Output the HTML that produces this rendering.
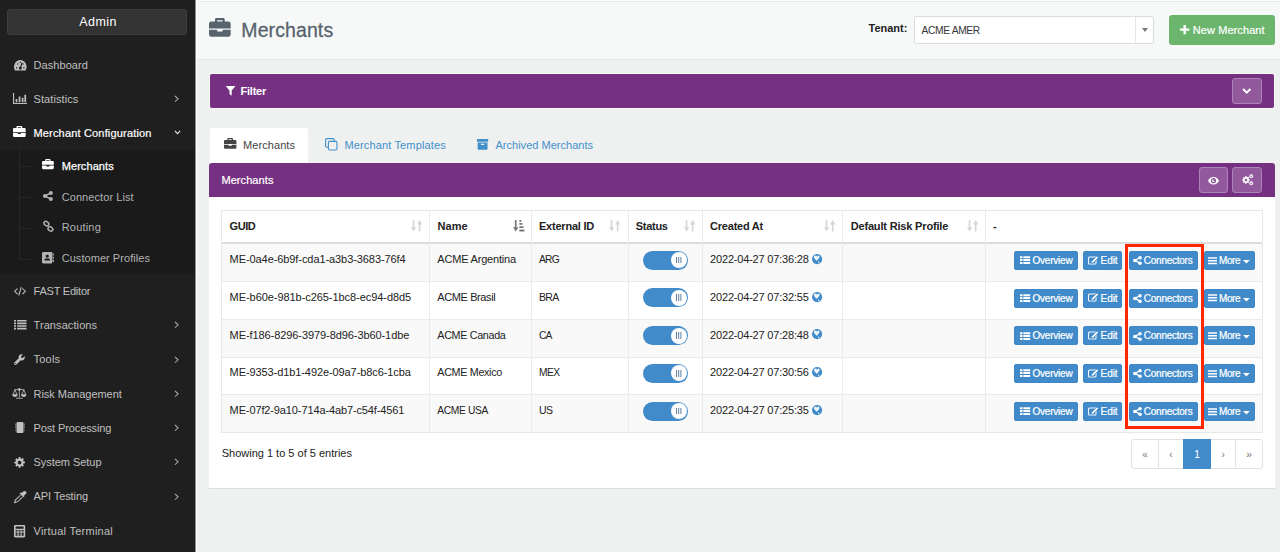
<!DOCTYPE html>
<html lang="en">
<head>
<meta charset="utf-8">
<title>Merchants</title>
<style>
*{box-sizing:border-box;margin:0;padding:0}
html,body{width:1280px;height:552px;overflow:hidden}
body{font-family:"Liberation Sans",sans-serif;font-size:11px;color:#333;background:#eff1f1;position:relative}
svg{display:block;overflow:visible}
.ic{position:absolute}
.t{position:absolute;line-height:16px;white-space:nowrap;color:#222}
#side{position:absolute;left:0;top:0;width:196px;height:552px;background:#1f1f1f}
#admin{position:absolute;left:7px;top:9px;width:180px;height:26px;background:#333;border:1px solid #3d3d3d;border-radius:3px}
#sub{position:absolute;left:0;top:150px;width:196px;height:124px;background:#1a1a1a}
.tr{position:absolute;background:#272727}
#hdr{position:absolute;left:197px;top:0;width:1083px;height:60px;background:#f7f9f9;border-bottom:1px solid #e4eaec;border-top:1px solid #fbfcfc;box-shadow:inset 0 1px 0 #e9ebeb}
#edge{position:absolute;left:195px;top:0;width:2px;height:552px;background:#fff;border-left:1px solid #8c8c8c}
#sel{position:absolute;left:914px;top:16px;width:240px;height:28px;background:#fff;border:1px solid #d9dddf;border-radius:2px}
#sel i{position:absolute;left:220px;top:0;width:1px;height:26px;background:#e4e6e8}
#sel b{position:absolute;left:226.5px;top:11px;border:3.2px solid transparent;border-top:4.2px solid #777;border-bottom:0}
#newm{position:absolute;left:1169px;top:15px;width:106px;height:30px;background:#6bb56d;border-radius:3px}
.pbar{position:absolute;background:#763081}
.pbtn{position:absolute;height:26px;background:#925a9d;border:1px solid #ad82b6;border-radius:3px}
#tabA{position:absolute;left:210px;top:128px;width:98px;height:36px;background:#fff;border-radius:3px 3px 0 0}
#card{position:absolute;left:209px;top:197px;width:1066px;height:292px;background:#fff;border-bottom:1px solid #dcdfdf}
#tbl{position:absolute;left:221px;top:210px;width:1042px;height:223px;border:1px solid #e8e8e8}
.row{position:absolute;left:222px;width:1040px}
.vl{position:absolute;top:211px;width:1px;height:221px;background:#ebebeb}
.btn{position:absolute;height:19px;background:#428bca;border:1px solid #3d86c8;border-radius:2px}
.sw{position:absolute;width:45px;height:19px;border-radius:9.5px;background:#428bca}
.sw i{position:absolute;left:27.6px;top:1.5px;width:16px;height:16px;border-radius:8px;background:#fff}
.sw i:before{content:"";position:absolute;left:5.2px;top:4.5px;width:1px;height:6.6px;background:#5f7fa0;box-shadow:2.2px 0 0 #5f7fa0,4.4px 0 0 #5f7fa0}
.pg{position:absolute;top:439px;height:30px;border:1px solid #e2e2e2;background:#fff}
#hl{position:absolute;left:1125px;top:244px;width:79px;height:185px;border:3px solid #ff2600}
</style>
</head>
<body>

<div id="side">
<div id="admin"></div>
<div class="t" style="left:79.3px;top:14px;font-size:12.5px;color:#fff;letter-spacing:0.41px">Admin</div>
<div id="sub"></div>
<div class="tr" style="left:19px;top:150px;width:1px;height:110px"></div>
<div class="tr" style="left:19px;top:166px;width:12px;height:1px"></div>
<div class="tr" style="left:19px;top:197px;width:12px;height:1px"></div>
<div class="tr" style="left:19px;top:228px;width:12px;height:1px"></div>
<div class="tr" style="left:19px;top:259px;width:12px;height:1px"></div>
<svg class="ic" style="left:13.5px;top:59.6px;color:#c0c0c0;" width="12.6" height="10.6" viewBox="0 1.5 16 12.5" preserveAspectRatio="none" fill="currentColor"><path fill-rule="evenodd" d="M8 1.5a8 8 0 0 0-6.9 12 .9.9 0 0 0 .8.5h12.2a.9.9 0 0 0 .8-.5A8 8 0 0 0 8 1.5zM8 3.2a.9.9 0 1 1 0 1.8.9.9 0 0 1 0-1.8zM3.4 11.6a.9.9 0 1 1 0-1.8.9.9 0 0 1 0 1.8zm1.3-4.4a.9.9 0 1 1 0-1.8.9.9 0 0 1 0 1.8zm6-1.9L9.3 9.7a1.8 1.8 0 1 1-1.3-.4l1.4-4.4a.67.67 0 0 1 1.3.4zm.7 1.9a.9.9 0 1 1 0-1.8.9.9 0 0 1 0 1.8zm1.2 4.4a.9.9 0 1 1 0-1.8.9.9 0 0 1 0 1.8z"/></svg>
<div class="t" style="left:33.5px;top:57px;font-size:11px;color:#c0c0c0;letter-spacing:0.07px">Dashboard</div>
<svg class="ic" style="left:13px;top:93px;color:#c0c0c0;" width="14" height="11" viewBox="0 1 16 13" preserveAspectRatio="none" fill="currentColor"><path d="M0 1h1.3v11.7H16V14H0zM3 8h2v4H3zM6.5 5h2v7h-2zM10 6.5h2V12h-2zM13 3h2v9h-2z"/></svg>
<div class="t" style="left:33.5px;top:91px;font-size:11px;color:#c0c0c0;letter-spacing:0.09px">Statistics</div>
<svg class="ic" style="left:174.3px;top:95.4px;color:#aaa" width="5" height="7.6" viewBox="0 0 5.5 9" preserveAspectRatio="none"><path d="M1 1l3.5 3.5L1 8" fill="none" stroke="currentColor" stroke-width="1.2"/></svg>
<svg class="ic" style="left:13.4px;top:126.4px;color:#fff;" width="12.7" height="11" viewBox="0 0.4 16 13.6" preserveAspectRatio="none" fill="currentColor"><path d="M4.4 3V1.6C4.4.9 5 .4 5.6.4h4.8c.7 0 1.2.5 1.2 1.2V3h2.8c.9 0 1.6.7 1.6 1.6V8H0V4.6C0 3.7.7 3 1.6 3zM6 3h4V2H6zM0 9h6v.8c0 .3.2.5.5.5h3c.3 0 .5-.2.5-.5V9h6v3.4c0 .9-.7 1.6-1.6 1.6H1.6C.7 14 0 13.3 0 12.4z" fill-rule="evenodd"/></svg>
<div class="t" style="left:33.5px;top:125px;font-size:11px;color:#fff;-webkit-text-stroke:0.2px #fff;letter-spacing:0.17px">Merchant Configuration</div>
<svg class="ic" style="left:173.6px;top:130.2px;color:#e8e8e8" width="7" height="4.6" viewBox="0 0 8 5" preserveAspectRatio="none"><path d="M1 1l3 3 3-3" fill="none" stroke="currentColor" stroke-width="1.2"/></svg>
<svg class="ic" style="left:13.9px;top:287px;color:#c0c0c0;" width="12" height="8.6" viewBox="0.2 0.7 15.6 13.6" preserveAspectRatio="none" fill="currentColor"><g fill="none" stroke="currentColor" stroke-width="1.5" stroke-linecap="round" stroke-linejoin="round"><path d="M4.5 3.5L1 7.5l3.5 4M11.5 3.5L15 7.5l-3.5 4M9.5 1.5L6.5 13.5"/></g></svg>
<div class="t" style="left:33.5px;top:283px;font-size:11px;color:#c0c0c0;letter-spacing:-0.21px">FAST Editor</div>
<svg class="ic" style="left:13.5px;top:319.8px;color:#c0c0c0;" width="12.5" height="9.4" viewBox="0 1.5 16 12.2" preserveAspectRatio="none" fill="currentColor"><path d="M0 1.5h2.6v2H0zM4 1.5h12v2H4zM0 4.9h2.6v2H0zM4 4.9h12v2H4zM0 8.3h2.6v2H0zM4 8.3h12v2H4zM0 11.7h2.6v2H0zM4 11.7h12v2H4z"/></svg>
<div class="t" style="left:33.5px;top:317px;font-size:11px;color:#c0c0c0;letter-spacing:0.09px">Transactions</div>
<svg class="ic" style="left:174.3px;top:321.2px;color:#aaa" width="5" height="7.6" viewBox="0 0 5.5 9" preserveAspectRatio="none"><path d="M1 1l3.5 3.5L1 8" fill="none" stroke="currentColor" stroke-width="1.2"/></svg>
<svg class="ic" style="left:14.3px;top:354px;color:#c0c0c0;" width="11" height="11" viewBox="0 0 16 16" preserveAspectRatio="none" fill="currentColor"><path d="M15.6 3.6a.38.38 0 0 0-.6-.2L12.7 5.7l-2.1-.3-.3-2.1L12.6 1a.38.38 0 0 0-.2-.6 4.5 4.5 0 0 0-5.5 5.8L.6 12.5a2 2 0 0 0 2.9 2.9L9.8 9.1a4.5 4.5 0 0 0 5.8-5.5zM2 14.7a.75.75 0 1 1 0-1.5.75.75 0 0 1 0 1.5z"/></svg>
<div class="t" style="left:33.5px;top:351px;font-size:11px;color:#c0c0c0;letter-spacing:0.22px">Tools</div>
<svg class="ic" style="left:174.3px;top:355.6px;color:#aaa" width="5" height="7.6" viewBox="0 0 5.5 9" preserveAspectRatio="none"><path d="M1 1l3.5 3.5L1 8" fill="none" stroke="currentColor" stroke-width="1.2"/></svg>
<svg class="ic" style="left:12.2px;top:387.4px;color:#c0c0c0;" width="14.7" height="12" viewBox="0 0 20 16" preserveAspectRatio="none" fill="currentColor"><g fill="none" stroke="currentColor" stroke-width="1.1" stroke-linejoin="round"><path d="M10 1.5V14M3 3.5h14M5.5 15h9M4 4L1 10.5h6zM16 4l-3 6.5h6z"/><path d="M1 10.5a3 2.2 0 0 0 6 0zM13 10.5a3 2.2 0 0 0 6 0z" fill="currentColor"/></g><circle cx="10" cy="3.2" r="1.6"/></svg>
<div class="t" style="left:33.5px;top:386px;font-size:11px;color:#c0c0c0;letter-spacing:-0.02px">Risk Management</div>
<svg class="ic" style="left:174.3px;top:389.9px;color:#aaa" width="5" height="7.6" viewBox="0 0 5.5 9" preserveAspectRatio="none"><path d="M1 1l3.5 3.5L1 8" fill="none" stroke="currentColor" stroke-width="1.2"/></svg>
<svg class="ic" style="left:14.8px;top:422px;color:#c0c0c0;" width="10" height="11" viewBox="0.8 0 14.4 16" preserveAspectRatio="none" fill="currentColor"><rect x="3" y="0" width="10" height="16" rx="1.5"/><path d="M0.8 2.5h2v1h-2zM0.8 5.5h2v1h-2zM0.8 8.5h2v1h-2zM0.8 11.5h2v1h-2zM13.2 2.5h2v1h-2zM13.2 5.5h2v1h-2zM13.2 8.5h2v1h-2zM13.2 11.5h2v1h-2z"/></svg>
<div class="t" style="left:33.5px;top:420px;font-size:11px;color:#c0c0c0;letter-spacing:-0.11px">Post Processing</div>
<svg class="ic" style="left:174.3px;top:424.2px;color:#aaa" width="5" height="7.6" viewBox="0 0 5.5 9" preserveAspectRatio="none"><path d="M1 1l3.5 3.5L1 8" fill="none" stroke="currentColor" stroke-width="1.2"/></svg>
<svg class="ic" style="left:14.1px;top:456.6px;color:#c0c0c0;" width="11.2" height="11.2" viewBox="0 0 16 16" preserveAspectRatio="none" fill="currentColor"><path fill-rule="evenodd" d="M6.8 0h2.4l.4 2.1 1.1.5 1.8-1.2 1.7 1.7-1.2 1.8.5 1.1 2.1.4v2.4l-2.1.4-.5 1.1 1.2 1.8-1.7 1.7-1.8-1.2-1.1.5-.4 2.1H6.8l-.4-2.1-1.1-.5-1.8 1.2-1.7-1.7 1.2-1.8-.5-1.1L.4 9.2V6.8l2.1-.4.5-1.1L1.8 3.5l1.7-1.7 1.8 1.2 1.1-.5zM8 5.3a2.7 2.7 0 1 0 0 5.4 2.7 2.7 0 0 0 0-5.4z"/></svg>
<div class="t" style="left:33.5px;top:454px;font-size:11px;color:#c0c0c0;letter-spacing:-0.04px">System Setup</div>
<svg class="ic" style="left:174.3px;top:458.4px;color:#aaa" width="5" height="7.6" viewBox="0 0 5.5 9" preserveAspectRatio="none"><path d="M1 1l3.5 3.5L1 8" fill="none" stroke="currentColor" stroke-width="1.2"/></svg>
<svg class="ic" style="left:13.6px;top:490.7px;color:#c0c0c0;" width="12.4" height="11.8" viewBox="0.5 0 15.8 16" preserveAspectRatio="none" fill="currentColor"><path d="M12.3.7a2.4 2.4 0 0 1 3.4 3.4l-2.4 2.4.6.6-1.4 1.4-5-5 1.4-1.4.6.6z"/><path d="M8.6 5.8L2.4 12a1.5 1.5 0 0 0-.4 1l-.1 1-.9 1.3.7.7 1.3-.9 1-.1a1.5 1.5 0 0 0 1-.4l6.2-6.2" fill="none" stroke="currentColor" stroke-width="1.3"/></svg>
<div class="t" style="left:33.5px;top:488px;font-size:11px;color:#c0c0c0;letter-spacing:-0.09px">API Testing</div>
<svg class="ic" style="left:174.3px;top:492.8px;color:#aaa" width="5" height="7.6" viewBox="0 0 5.5 9" preserveAspectRatio="none"><path d="M1 1l3.5 3.5L1 8" fill="none" stroke="currentColor" stroke-width="1.2"/></svg>
<svg class="ic" style="left:13.6px;top:524.7px;color:#c0c0c0;" width="11.2" height="12.4" viewBox="1 0 14 16" preserveAspectRatio="none" fill="currentColor"><path fill-rule="evenodd" d="M2.5 0h11c.8 0 1.5.7 1.5 1.5v13c0 .8-.7 1.5-1.5 1.5h-11C1.7 16 1 15.3 1 14.5v-13C1 .7 1.7 0 2.5 0zM3 2v3h10V2zM3 6.5v2h2.4v-2zm3.8 0v2h2.4v-2zm3.8 0v2H13v-2zM3 9.7v2h2.4v-2zm3.8 0v2h2.4v-2zm3.8 0V14H13V9.7zM3 12v2h2.4v-2zm3.8 0v2h2.4v-2z"/></svg>
<div class="t" style="left:33.5px;top:523px;font-size:11px;color:#c0c0c0;letter-spacing:0.26px">Virtual Terminal</div>
<svg class="ic" style="left:42px;top:159.3px;color:#fff;" width="11.8" height="10.3" viewBox="0 0.4 16 13.6" preserveAspectRatio="none" fill="currentColor"><path d="M4.4 3V1.6C4.4.9 5 .4 5.6.4h4.8c.7 0 1.2.5 1.2 1.2V3h2.8c.9 0 1.6.7 1.6 1.6V8H0V4.6C0 3.7.7 3 1.6 3zM6 3h4V2H6zM0 9h6v.8c0 .3.2.5.5.5h3c.3 0 .5-.2.5-.5V9h6v3.4c0 .9-.7 1.6-1.6 1.6H1.6C.7 14 0 13.3 0 12.4z" fill-rule="evenodd"/></svg>
<div class="t" style="left:61.7px;top:158px;font-size:11px;color:#fff;-webkit-text-stroke:0.25px #fff;letter-spacing:0.08px">Merchants</div>
<svg class="ic" style="left:43.2px;top:191px;color:#b2b2b2;" width="9.8" height="10" viewBox="0.4 0.2 15 15.6" preserveAspectRatio="none" fill="currentColor"><circle cx="12.4" cy="3.2" r="3.1"/><circle cx="3.4" cy="8" r="3.1"/><circle cx="12.4" cy="12.8" r="3.1"/><path d="M3.4 8l9-4.8M3.4 8l9 4.8" stroke="currentColor" stroke-width="2.3" fill="none"/></svg>
<div class="t" style="left:61.7px;top:189px;font-size:11px;color:#b2b2b2;letter-spacing:0.08px">Connector List</div>
<svg class="ic" style="left:42.7px;top:221.3px;color:#b2b2b2;" width="10.8" height="10.6" viewBox="0 0 16 16" preserveAspectRatio="none" fill="currentColor"><g fill="none" stroke="currentColor" stroke-width="2.1"><rect x="1.2" y="1.2" width="7.6" height="5.6" rx="2.8" transform="rotate(40 5 4)"/><rect x="7.2" y="9.2" width="7.6" height="5.6" rx="2.8" transform="rotate(40 11 12)"/></g></svg>
<div class="t" style="left:61.7px;top:219px;font-size:11px;color:#b2b2b2;letter-spacing:0.2px">Routing</div>
<svg class="ic" style="left:42.4px;top:252.3px;color:#b2b2b2;" width="11.9" height="11.4" viewBox="1 0 14.8 16" preserveAspectRatio="none" fill="currentColor"><path fill-rule="evenodd" d="M2.6 0h9.8c.9 0 1.6.7 1.6 1.6v12.8c0 .9-.7 1.6-1.6 1.6H2.6C1.7 16 1 15.3 1 14.4V1.6C1 .7 1.7 0 2.6 0zM7.5 4a2 2 0 1 0 0 4 2 2 0 0 0 0-4zM4 11.4c0 .4.3.6.7.6h5.6c.4 0 .7-.2.7-.6v-.5C11 9.8 10 9 8.9 9h-.2a2.9 2.9 0 0 1-2.4 0h-.2C5 9 4 9.8 4 10.9z"/><path d="M14.5 2h.9c.2 0 .4.2.4.4v2.2c0 .2-.2.4-.4.4h-.9zM14.5 6.5h.9c.2 0 .4.2.4.4v2.2c0 .2-.2.4-.4.4h-.9zM14.5 11h.9c.2 0 .4.2.4.4v2.2c0 .2-.2.4-.4.4h-.9z"/></svg>
<div class="t" style="left:61.7px;top:250px;font-size:11px;color:#b2b2b2;letter-spacing:0.05px">Customer Profiles</div>
</div>
<div id="edge"></div>
<div id="hdr"></div>
<svg class="ic" style="left:208.6px;top:17.8px;color:#57646e;" width="21.7" height="18.7" viewBox="0 0.4 16 13.6" preserveAspectRatio="none" fill="currentColor"><path d="M4.4 3V1.6C4.4.9 5 .4 5.6.4h4.8c.7 0 1.2.5 1.2 1.2V3h2.8c.9 0 1.6.7 1.6 1.6V8H0V4.6C0 3.7.7 3 1.6 3zM6 3h4V2H6zM0 9h6v.8c0 .3.2.5.5.5h3c.3 0 .5-.2.5-.5V9h6v3.4c0 .9-.7 1.6-1.6 1.6H1.6C.7 14 0 13.3 0 12.4z" fill-rule="evenodd"/></svg>
<div class="t" style="left:241.3px;top:18px;font-size:19.5px;line-height:24px;color:#57646e;-webkit-text-stroke:0.3px #57646e;letter-spacing:0.1px">Merchants</div>
<div class="t" style="left:868.5px;top:20px;font-size:11px;font-weight:bold;color:#222;letter-spacing:0.0px">Tenant:</div>
<div id="sel"><i></i><b></b></div>
<div class="t" style="left:921.5px;top:22px;font-size:11px;color:#333;"><span style="font-size:10.25px;letter-spacing:-0.35px">ACME AMER</span></div>
<div id="newm"></div>
<svg class="ic" style="left:1180px;top:24.9px" width="9.4" height="9.2" viewBox="0 0 10 10" preserveAspectRatio="none"><path d="M3.7 0h2.6v3.7H10v2.6H6.3V10H3.7V6.3H0V3.7h3.7z" fill="#fff"/></svg>
<div class="t" style="left:1192.8px;top:22px;font-size:11px;color:#fff;-webkit-text-stroke:0.2px #fff;letter-spacing:0.08px">New Merchant</div>
<div class="pbar" style="left:209px;top:73px;width:1066px;height:36px;border:1px solid #fbfafb;border-radius:3px"></div>
<svg class="ic" style="left:225.6px;top:86.1px;color:#fff;" width="9.2" height="9.6" viewBox="0 0 10 10" preserveAspectRatio="none" fill="currentColor"><path d="M.3 0h9.4c.3 0 .4.3.2.5L6.2 4.6v4.9c0 .3-.3.4-.5.3L4 8.6a.5.5 0 0 1-.2-.4V4.6L.1.5C-.1.3 0 0 .3 0z"/></svg>
<div class="t" style="left:240.6px;top:83px;font-size:11px;font-weight:bold;color:#fff;letter-spacing:-0.26px">Filter</div>
<div class="pbtn" style="left:1232px;top:78px;width:30px"></div>
<svg class="ic" style="left:1242.4px;top:88.3px" width="9.4" height="6.2" viewBox="0 0 9 6" preserveAspectRatio="none"><path d="M1 1l3.5 3.5L8 1" fill="none" stroke="#fff" stroke-width="1.9"/></svg>
<div id="tabA"></div>
<svg class="ic" style="left:223.8px;top:138.1px;color:#444;" width="12.4" height="10.8" viewBox="0 0.4 16 13.6" preserveAspectRatio="none" fill="currentColor"><path d="M4.4 3V1.6C4.4.9 5 .4 5.6.4h4.8c.7 0 1.2.5 1.2 1.2V3h2.8c.9 0 1.6.7 1.6 1.6V8H0V4.6C0 3.7.7 3 1.6 3zM6 3h4V2H6zM0 9h6v.8c0 .3.2.5.5.5h3c.3 0 .5-.2.5-.5V9h6v3.4c0 .9-.7 1.6-1.6 1.6H1.6C.7 14 0 13.3 0 12.4z" fill-rule="evenodd"/></svg>
<div class="t" style="left:243px;top:137px;font-size:11px;color:#444;letter-spacing:0.08px">Merchants</div>
<svg class="ic" style="left:325.4px;top:137.7px;color:#418fc9;" width="12.6" height="12.6" viewBox="0 0 12.6 12.6" preserveAspectRatio="none" fill="currentColor"><g fill="none" stroke="currentColor" stroke-width="1.1"><rect x=".6" y=".6" width="8.6" height="8.6" rx="1.4"/><rect x="3.4" y="3.4" width="8.6" height="8.6" rx="1.4" fill="#eff1f1"/></g></svg>
<div class="t" style="left:344.5px;top:137px;font-size:11px;color:#418fc9;letter-spacing:0.14px">Merchant Templates</div>
<svg class="ic" style="left:477px;top:138.8px;color:#418fc9;" width="11.2" height="10.7" viewBox="0 0 12 12" preserveAspectRatio="none" fill="currentColor"><path d="M0 0h12v3.2H0zM.7 4h10.6v7.2c0 .4-.3.8-.8.8h-9c-.5 0-.8-.4-.8-.8zM4.2 5.4v1.2h3.6V5.4z" fill-rule="evenodd"/></svg>
<div class="t" style="left:495.4px;top:137px;font-size:11px;color:#418fc9;letter-spacing:0.03px">Archived Merchants</div>
<div id="card"></div>
<div class="pbar" style="left:209px;top:163px;width:1066px;height:34px;border-radius:3px 3px 0 0"></div>
<div class="t" style="left:221.4px;top:172px;font-size:11px;color:#fff;-webkit-text-stroke:0.2px #fff;letter-spacing:0.08px">Merchants</div>
<div class="pbtn" style="left:1199px;top:167px;width:29px"></div>
<svg class="ic" style="left:1208px;top:176.7px;color:#fff;" width="11" height="7.4" viewBox="0 0 12 8" preserveAspectRatio="none" fill="currentColor"><path fill-rule="evenodd" d="M6 0C3.3 0 1 1.6 0 4c1 2.4 3.3 4 6 4s5-1.6 6-4C11 1.6 8.7 0 6 0zm0 1.2a2.8 2.8 0 1 1 0 5.6 2.8 2.8 0 0 1 0-5.6zM6 2.5A1.5 1.5 0 1 0 7.5 4 1 1 0 0 1 6 2.5z"/></svg>
<div class="pbtn" style="left:1232px;top:167px;width:30px"></div>
<svg class="ic" style="left:1241.6px;top:175.6px;color:#fff;" width="8" height="8.2" viewBox="0 0 16 16" preserveAspectRatio="none" fill="currentColor"><path fill-rule="evenodd" d="M6.8 0h2.4l.4 2.1 1.1.5 1.8-1.2 1.7 1.7-1.2 1.8.5 1.1 2.1.4v2.4l-2.1.4-.5 1.1 1.2 1.8-1.7 1.7-1.8-1.2-1.1.5-.4 2.1H6.8l-.4-2.1-1.1-.5-1.8 1.2-1.7-1.7 1.2-1.8-.5-1.1L.4 9.2V6.8l2.1-.4.5-1.1L1.8 3.5l1.7-1.7 1.8 1.2 1.1-.5zM8 5.3a2.7 2.7 0 1 0 0 5.4 2.7 2.7 0 0 0 0-5.4z"/></svg>
<svg class="ic" style="left:1249.2px;top:174.4px;color:#fff;" width="4.4" height="4.6" viewBox="0 0 16 16" preserveAspectRatio="none" fill="currentColor"><path fill-rule="evenodd" d="M6.8 0h2.4l.4 2.1 1.1.5 1.8-1.2 1.7 1.7-1.2 1.8.5 1.1 2.1.4v2.4l-2.1.4-.5 1.1 1.2 1.8-1.7 1.7-1.8-1.2-1.1.5-.4 2.1H6.8l-.4-2.1-1.1-.5-1.8 1.2-1.7-1.7 1.2-1.8-.5-1.1L.4 9.2V6.8l2.1-.4.5-1.1L1.8 3.5l1.7-1.7 1.8 1.2 1.1-.5zM8 5.3a2.7 2.7 0 1 0 0 5.4 2.7 2.7 0 0 0 0-5.4z"/></svg>
<svg class="ic" style="left:1249.2px;top:180.8px;color:#fff;" width="4.4" height="4.6" viewBox="0 0 16 16" preserveAspectRatio="none" fill="currentColor"><path fill-rule="evenodd" d="M6.8 0h2.4l.4 2.1 1.1.5 1.8-1.2 1.7 1.7-1.2 1.8.5 1.1 2.1.4v2.4l-2.1.4-.5 1.1 1.2 1.8-1.7 1.7-1.8-1.2-1.1.5-.4 2.1H6.8l-.4-2.1-1.1-.5-1.8 1.2-1.7-1.7 1.2-1.8-.5-1.1L.4 9.2V6.8l2.1-.4.5-1.1L1.8 3.5l1.7-1.7 1.8 1.2 1.1-.5zM8 5.3a2.7 2.7 0 1 0 0 5.4 2.7 2.7 0 0 0 0-5.4z"/></svg>
<div id="tbl"></div>
<div class="row" style="top:242px;height:2px;background:#dcdcdc"></div>
<div class="row" style="top:244px;height:37px;background:#f9f9f9;"></div>
<div class="row" style="top:281px;height:38px;background:#fff;border-top:1px solid #ebebeb;"></div>
<div class="row" style="top:319px;height:38px;background:#f9f9f9;border-top:1px solid #ebebeb;"></div>
<div class="row" style="top:357px;height:37px;background:#fff;border-top:1px solid #ebebeb;"></div>
<div class="row" style="top:394px;height:38px;background:#f9f9f9;border-top:1px solid #ebebeb;"></div>
<div class="vl" style="left:429px"></div>
<div class="vl" style="left:531px"></div>
<div class="vl" style="left:628px"></div>
<div class="vl" style="left:702px"></div>
<div class="vl" style="left:842px"></div>
<div class="vl" style="left:985px"></div>
<div class="t" style="left:229.6px;top:218px;font-size:11px;font-weight:bold;color:#222;letter-spacing:-0.46px">GUID</div>
<svg class="ic" style="left:410.6px;top:220.2px;color:#d6d6d6;" width="11.4" height="11.6" viewBox="0 0 11.8 12" preserveAspectRatio="none" fill="currentColor"><path d="M1.8 0h1.7v7.4h2L2.65 12 0 7.4h1.8zM8.1 12h1.7V4.6h2L8.95 0 6.3 4.6h1.8z"/></svg>
<div class="t" style="left:437.5px;top:218px;font-size:11px;font-weight:bold;color:#222;letter-spacing:0.04px">Name</div>
<svg class="ic" style="left:513.1px;top:220.2px;color:#777;" width="11.4" height="11.6" viewBox="0 0 11.8 12" preserveAspectRatio="none" fill="currentColor"><path d="M1.9 0h1.8v7.4h2L2.8 12 0 7.4h1.9zM6.6 0h2.1v1.7H6.6zM6.6 3.2h3.2v1.8H6.6zM6.6 6.5h4.3v1.9H6.6zM6.6 9.8h5.2V12H6.6z"/></svg>
<div class="t" style="left:539px;top:218px;font-size:11px;font-weight:bold;color:#222;letter-spacing:-0.22px">External ID</div>
<svg class="ic" style="left:609.2px;top:220.2px;color:#d6d6d6;" width="11.4" height="11.6" viewBox="0 0 11.8 12" preserveAspectRatio="none" fill="currentColor"><path d="M1.8 0h1.7v7.4h2L2.65 12 0 7.4h1.8zM8.1 12h1.7V4.6h2L8.95 0 6.3 4.6h1.8z"/></svg>
<div class="t" style="left:635.7px;top:218px;font-size:11px;font-weight:bold;color:#222;letter-spacing:-0.27px">Status</div>
<svg class="ic" style="left:684.2px;top:220.2px;color:#d6d6d6;" width="11.4" height="11.6" viewBox="0 0 11.8 12" preserveAspectRatio="none" fill="currentColor"><path d="M1.8 0h1.7v7.4h2L2.65 12 0 7.4h1.8zM8.1 12h1.7V4.6h2L8.95 0 6.3 4.6h1.8z"/></svg>
<div class="t" style="left:710.1px;top:218px;font-size:11px;font-weight:bold;color:#222;letter-spacing:-0.23px">Created At</div>
<svg class="ic" style="left:824.4px;top:220.2px;color:#d6d6d6;" width="11.4" height="11.6" viewBox="0 0 11.8 12" preserveAspectRatio="none" fill="currentColor"><path d="M1.8 0h1.7v7.4h2L2.65 12 0 7.4h1.8zM8.1 12h1.7V4.6h2L8.95 0 6.3 4.6h1.8z"/></svg>
<div class="t" style="left:850.7px;top:218px;font-size:11px;font-weight:bold;color:#222;letter-spacing:-0.17px">Default Risk Profile</div>
<svg class="ic" style="left:966.9px;top:220.2px;color:#d6d6d6;" width="11.4" height="11.6" viewBox="0 0 11.8 12" preserveAspectRatio="none" fill="currentColor"><path d="M1.8 0h1.7v7.4h2L2.65 12 0 7.4h1.8zM8.1 12h1.7V4.6h2L8.95 0 6.3 4.6h1.8z"/></svg>
<div class="t" style="left:993px;top:218px;font-size:11px;font-weight:bold;color:#222;letter-spacing:0.05px">-</div>
<div class="t" style="left:229.6px;top:251px;font-size:11px;letter-spacing:-0.08px">ME-0a4e-6b9f-cda1-a3b3-3683-76f4</div>
<div class="t" style="left:437.3px;top:251px;font-size:11px;letter-spacing:-0.19px">ACME Argentina</div>
<div class="t" style="left:539px;top:251px;font-size:11px;"><span style="font-size:10.25px;letter-spacing:-0.79px">ARG</span></div>
<div class="t" style="left:710.1px;top:251px;font-size:11px;letter-spacing:-0.19px">2022-04-27 07:36:28</div>
<div class="sw" style="left:643px;top:250.7px"><i></i></div>
<svg class="ic" style="left:812px;top:253.9px" width="10.2" height="10.2" viewBox="0 0 10 10"><circle cx="5" cy="5" r="5" fill="#428bca"/><path d="M1.9 2.3C2.5 1.4 3.6 1.1 4.3 1.6l.6 1 1-1c.8-.1 1.5.4 1.6 1.2C7.4 4 6.5 4.8 5.7 5.4L5 6.7C4.1 6.2 3.1 5.2 2.5 4.4 2 3.7 1.7 3 1.9 2.3z" fill="#eef5fb"/><circle cx="6.6" cy="8.1" r=".7" fill="#eef5fb"/></svg>
<div class="btn" style="left:1014.4px;top:250.9px;width:63.5px"></div>
<svg class="ic" style="left:1019.8px;top:256.0px;color:#fff;" width="10.2" height="8.2" viewBox="0 0 11 10" preserveAspectRatio="none" fill="currentColor"><path d="M0 .3h2.7v2.4H0zM3.6.3H11v2.4H3.6zM0 3.8h2.7v2.4H0zM3.6 3.8H11v2.4H3.6zM0 7.3h2.7v2.4H0zM3.6 7.3H11v2.4H3.6z"/></svg>
<div class="t" style="left:1032.5px;top:253px;font-size:10px;line-height:15px;color:#fff;-webkit-text-stroke:0.22px #fff;letter-spacing:-0.22px">Overview</div>
<div class="btn" style="left:1083.1px;top:250.9px;width:39.2px"></div>
<svg class="ic" style="left:1087.6px;top:255.7px" width="10.4" height="8.6" viewBox="0 0 10.4 8.6"><rect x=".5" y="1" width="7.5" height="7.1" rx=".9" fill="none" stroke="#fff" stroke-width="1.05" opacity=".95"/><path d="M8.9.1l1.5 1.5-5.3 5.3-2 .5.5-2z" fill="#fff" stroke="#428bca" stroke-width=".7"/></svg>
<div class="t" style="left:1100.6px;top:253px;font-size:10px;line-height:15px;color:#fff;-webkit-text-stroke:0.22px #fff;letter-spacing:-0.1px">Edit</div>
<div class="btn" style="left:1128.5px;top:250.9px;width:69.4px"></div>
<svg class="ic" style="left:1132.7px;top:256.0px;color:#fff;" width="8.9" height="8.9" viewBox="0.3 0.1 15.3 15.8" preserveAspectRatio="none" fill="currentColor"><circle cx="12.4" cy="3.2" r="3.1"/><circle cx="3.4" cy="8" r="3.1"/><circle cx="12.4" cy="12.8" r="3.1"/><path d="M3.4 8l9-4.8M3.4 8l9 4.8" stroke="currentColor" stroke-width="2.3" fill="none"/></svg>
<div class="t" style="left:1143.8px;top:253px;font-size:10px;line-height:15px;color:#fff;-webkit-text-stroke:0.22px #fff;letter-spacing:-0.25px">Connectors</div>
<div class="btn" style="left:1204px;top:250.9px;width:51px"></div>
<svg class="ic" style="left:1207.9px;top:256.7px;color:#fff;" width="9" height="7.6" viewBox="0 0 10 10" preserveAspectRatio="none" fill="currentColor"><path d="M0 .4h10v2H0zM0 4h10v2H0zM0 7.6h10v2H0z"/></svg>
<div class="t" style="left:1219px;top:253px;font-size:10px;line-height:15px;color:#fff;-webkit-text-stroke:0.22px #fff;letter-spacing:-0.43px">More</div>
<svg class="ic" style="left:1242.8px;top:259.9px" width="6.8" height="3.5" viewBox="0 0 6 3.5" preserveAspectRatio="none"><path d="M0 0h6L3 3.5z" fill="#fff"/></svg>
<div class="t" style="left:229.6px;top:289px;font-size:11px;letter-spacing:-0.06px">ME-b60e-981b-c265-1bc8-ec94-d8d5</div>
<div class="t" style="left:437.3px;top:289px;font-size:11px;letter-spacing:-0.4px">ACME Brasil</div>
<div class="t" style="left:539px;top:289px;font-size:11px;"><span style="font-size:10.5px;letter-spacing:-0.68px">BRA</span></div>
<div class="t" style="left:710.1px;top:289px;font-size:11px;letter-spacing:-0.19px">2022-04-27 07:32:55</div>
<div class="sw" style="left:643px;top:288.45px"><i></i></div>
<svg class="ic" style="left:812px;top:291.65px" width="10.2" height="10.2" viewBox="0 0 10 10"><circle cx="5" cy="5" r="5" fill="#428bca"/><path d="M1.9 2.3C2.5 1.4 3.6 1.1 4.3 1.6l.6 1 1-1c.8-.1 1.5.4 1.6 1.2C7.4 4 6.5 4.8 5.7 5.4L5 6.7C4.1 6.2 3.1 5.2 2.5 4.4 2 3.7 1.7 3 1.9 2.3z" fill="#eef5fb"/><circle cx="6.6" cy="8.1" r=".7" fill="#eef5fb"/></svg>
<div class="btn" style="left:1014.4px;top:288.65px;width:63.5px"></div>
<svg class="ic" style="left:1019.8px;top:293.75px;color:#fff;" width="10.2" height="8.2" viewBox="0 0 11 10" preserveAspectRatio="none" fill="currentColor"><path d="M0 .3h2.7v2.4H0zM3.6.3H11v2.4H3.6zM0 3.8h2.7v2.4H0zM3.6 3.8H11v2.4H3.6zM0 7.3h2.7v2.4H0zM3.6 7.3H11v2.4H3.6z"/></svg>
<div class="t" style="left:1032.5px;top:291px;font-size:10px;line-height:15px;color:#fff;-webkit-text-stroke:0.22px #fff;letter-spacing:-0.22px">Overview</div>
<div class="btn" style="left:1083.1px;top:288.65px;width:39.2px"></div>
<svg class="ic" style="left:1087.6px;top:293.45px" width="10.4" height="8.6" viewBox="0 0 10.4 8.6"><rect x=".5" y="1" width="7.5" height="7.1" rx=".9" fill="none" stroke="#fff" stroke-width="1.05" opacity=".95"/><path d="M8.9.1l1.5 1.5-5.3 5.3-2 .5.5-2z" fill="#fff" stroke="#428bca" stroke-width=".7"/></svg>
<div class="t" style="left:1100.6px;top:291px;font-size:10px;line-height:15px;color:#fff;-webkit-text-stroke:0.22px #fff;letter-spacing:-0.1px">Edit</div>
<div class="btn" style="left:1128.5px;top:288.65px;width:69.4px"></div>
<svg class="ic" style="left:1132.7px;top:293.75px;color:#fff;" width="8.9" height="8.9" viewBox="0.3 0.1 15.3 15.8" preserveAspectRatio="none" fill="currentColor"><circle cx="12.4" cy="3.2" r="3.1"/><circle cx="3.4" cy="8" r="3.1"/><circle cx="12.4" cy="12.8" r="3.1"/><path d="M3.4 8l9-4.8M3.4 8l9 4.8" stroke="currentColor" stroke-width="2.3" fill="none"/></svg>
<div class="t" style="left:1143.8px;top:291px;font-size:10px;line-height:15px;color:#fff;-webkit-text-stroke:0.22px #fff;letter-spacing:-0.25px">Connectors</div>
<div class="btn" style="left:1204px;top:288.65px;width:51px"></div>
<svg class="ic" style="left:1207.9px;top:294.45px;color:#fff;" width="9" height="7.6" viewBox="0 0 10 10" preserveAspectRatio="none" fill="currentColor"><path d="M0 .4h10v2H0zM0 4h10v2H0zM0 7.6h10v2H0z"/></svg>
<div class="t" style="left:1219px;top:291px;font-size:10px;line-height:15px;color:#fff;-webkit-text-stroke:0.22px #fff;letter-spacing:-0.43px">More</div>
<svg class="ic" style="left:1242.8px;top:297.65px" width="6.8" height="3.5" viewBox="0 0 6 3.5" preserveAspectRatio="none"><path d="M0 0h6L3 3.5z" fill="#fff"/></svg>
<div class="t" style="left:229.6px;top:327px;font-size:11px;letter-spacing:-0.08px">ME-f186-8296-3979-8d96-3b60-1dbe</div>
<div class="t" style="left:437.3px;top:327px;font-size:11px;"><span style="font-size:10.75px;letter-spacing:-0.32px">ACME Canada</span></div>
<div class="t" style="left:539px;top:327px;font-size:11px;"><span style="font-size:10.25px;letter-spacing:-0.95px">CA</span></div>
<div class="t" style="left:710.1px;top:327px;font-size:11px;letter-spacing:-0.19px">2022-04-27 07:28:48</div>
<div class="sw" style="left:643px;top:326.2px"><i></i></div>
<svg class="ic" style="left:812px;top:329.4px" width="10.2" height="10.2" viewBox="0 0 10 10"><circle cx="5" cy="5" r="5" fill="#428bca"/><path d="M1.9 2.3C2.5 1.4 3.6 1.1 4.3 1.6l.6 1 1-1c.8-.1 1.5.4 1.6 1.2C7.4 4 6.5 4.8 5.7 5.4L5 6.7C4.1 6.2 3.1 5.2 2.5 4.4 2 3.7 1.7 3 1.9 2.3z" fill="#eef5fb"/><circle cx="6.6" cy="8.1" r=".7" fill="#eef5fb"/></svg>
<div class="btn" style="left:1014.4px;top:326.4px;width:63.5px"></div>
<svg class="ic" style="left:1019.8px;top:331.5px;color:#fff;" width="10.2" height="8.2" viewBox="0 0 11 10" preserveAspectRatio="none" fill="currentColor"><path d="M0 .3h2.7v2.4H0zM3.6.3H11v2.4H3.6zM0 3.8h2.7v2.4H0zM3.6 3.8H11v2.4H3.6zM0 7.3h2.7v2.4H0zM3.6 7.3H11v2.4H3.6z"/></svg>
<div class="t" style="left:1032.5px;top:328px;font-size:10px;line-height:15px;color:#fff;-webkit-text-stroke:0.22px #fff;letter-spacing:-0.22px">Overview</div>
<div class="btn" style="left:1083.1px;top:326.4px;width:39.2px"></div>
<svg class="ic" style="left:1087.6px;top:331.2px" width="10.4" height="8.6" viewBox="0 0 10.4 8.6"><rect x=".5" y="1" width="7.5" height="7.1" rx=".9" fill="none" stroke="#fff" stroke-width="1.05" opacity=".95"/><path d="M8.9.1l1.5 1.5-5.3 5.3-2 .5.5-2z" fill="#fff" stroke="#428bca" stroke-width=".7"/></svg>
<div class="t" style="left:1100.6px;top:328px;font-size:10px;line-height:15px;color:#fff;-webkit-text-stroke:0.22px #fff;letter-spacing:-0.1px">Edit</div>
<div class="btn" style="left:1128.5px;top:326.4px;width:69.4px"></div>
<svg class="ic" style="left:1132.7px;top:331.5px;color:#fff;" width="8.9" height="8.9" viewBox="0.3 0.1 15.3 15.8" preserveAspectRatio="none" fill="currentColor"><circle cx="12.4" cy="3.2" r="3.1"/><circle cx="3.4" cy="8" r="3.1"/><circle cx="12.4" cy="12.8" r="3.1"/><path d="M3.4 8l9-4.8M3.4 8l9 4.8" stroke="currentColor" stroke-width="2.3" fill="none"/></svg>
<div class="t" style="left:1143.8px;top:328px;font-size:10px;line-height:15px;color:#fff;-webkit-text-stroke:0.22px #fff;letter-spacing:-0.25px">Connectors</div>
<div class="btn" style="left:1204px;top:326.4px;width:51px"></div>
<svg class="ic" style="left:1207.9px;top:332.2px;color:#fff;" width="9" height="7.6" viewBox="0 0 10 10" preserveAspectRatio="none" fill="currentColor"><path d="M0 .4h10v2H0zM0 4h10v2H0zM0 7.6h10v2H0z"/></svg>
<div class="t" style="left:1219px;top:328px;font-size:10px;line-height:15px;color:#fff;-webkit-text-stroke:0.22px #fff;letter-spacing:-0.43px">More</div>
<svg class="ic" style="left:1242.8px;top:335.4px" width="6.8" height="3.5" viewBox="0 0 6 3.5" preserveAspectRatio="none"><path d="M0 0h6L3 3.5z" fill="#fff"/></svg>
<div class="t" style="left:229.6px;top:364px;font-size:11px;letter-spacing:-0.09px">ME-9353-d1b1-492e-09a7-b8c6-1cba</div>
<div class="t" style="left:437.3px;top:364px;font-size:11px;"><span style="font-size:10.75px;letter-spacing:-0.32px">ACME Mexico</span></div>
<div class="t" style="left:539px;top:364px;font-size:11px;"><span style="font-size:10.25px;letter-spacing:-0.57px">MEX</span></div>
<div class="t" style="left:710.1px;top:364px;font-size:11px;letter-spacing:-0.19px">2022-04-27 07:30:56</div>
<div class="sw" style="left:643px;top:363.95px"><i></i></div>
<svg class="ic" style="left:812px;top:367.15px" width="10.2" height="10.2" viewBox="0 0 10 10"><circle cx="5" cy="5" r="5" fill="#428bca"/><path d="M1.9 2.3C2.5 1.4 3.6 1.1 4.3 1.6l.6 1 1-1c.8-.1 1.5.4 1.6 1.2C7.4 4 6.5 4.8 5.7 5.4L5 6.7C4.1 6.2 3.1 5.2 2.5 4.4 2 3.7 1.7 3 1.9 2.3z" fill="#eef5fb"/><circle cx="6.6" cy="8.1" r=".7" fill="#eef5fb"/></svg>
<div class="btn" style="left:1014.4px;top:364.15px;width:63.5px"></div>
<svg class="ic" style="left:1019.8px;top:369.25px;color:#fff;" width="10.2" height="8.2" viewBox="0 0 11 10" preserveAspectRatio="none" fill="currentColor"><path d="M0 .3h2.7v2.4H0zM3.6.3H11v2.4H3.6zM0 3.8h2.7v2.4H0zM3.6 3.8H11v2.4H3.6zM0 7.3h2.7v2.4H0zM3.6 7.3H11v2.4H3.6z"/></svg>
<div class="t" style="left:1032.5px;top:366px;font-size:10px;line-height:15px;color:#fff;-webkit-text-stroke:0.22px #fff;letter-spacing:-0.22px">Overview</div>
<div class="btn" style="left:1083.1px;top:364.15px;width:39.2px"></div>
<svg class="ic" style="left:1087.6px;top:368.95px" width="10.4" height="8.6" viewBox="0 0 10.4 8.6"><rect x=".5" y="1" width="7.5" height="7.1" rx=".9" fill="none" stroke="#fff" stroke-width="1.05" opacity=".95"/><path d="M8.9.1l1.5 1.5-5.3 5.3-2 .5.5-2z" fill="#fff" stroke="#428bca" stroke-width=".7"/></svg>
<div class="t" style="left:1100.6px;top:366px;font-size:10px;line-height:15px;color:#fff;-webkit-text-stroke:0.22px #fff;letter-spacing:-0.1px">Edit</div>
<div class="btn" style="left:1128.5px;top:364.15px;width:69.4px"></div>
<svg class="ic" style="left:1132.7px;top:369.25px;color:#fff;" width="8.9" height="8.9" viewBox="0.3 0.1 15.3 15.8" preserveAspectRatio="none" fill="currentColor"><circle cx="12.4" cy="3.2" r="3.1"/><circle cx="3.4" cy="8" r="3.1"/><circle cx="12.4" cy="12.8" r="3.1"/><path d="M3.4 8l9-4.8M3.4 8l9 4.8" stroke="currentColor" stroke-width="2.3" fill="none"/></svg>
<div class="t" style="left:1143.8px;top:366px;font-size:10px;line-height:15px;color:#fff;-webkit-text-stroke:0.22px #fff;letter-spacing:-0.25px">Connectors</div>
<div class="btn" style="left:1204px;top:364.15px;width:51px"></div>
<svg class="ic" style="left:1207.9px;top:369.95px;color:#fff;" width="9" height="7.6" viewBox="0 0 10 10" preserveAspectRatio="none" fill="currentColor"><path d="M0 .4h10v2H0zM0 4h10v2H0zM0 7.6h10v2H0z"/></svg>
<div class="t" style="left:1219px;top:366px;font-size:10px;line-height:15px;color:#fff;-webkit-text-stroke:0.22px #fff;letter-spacing:-0.43px">More</div>
<svg class="ic" style="left:1242.8px;top:373.15px" width="6.8" height="3.5" viewBox="0 0 6 3.5" preserveAspectRatio="none"><path d="M0 0h6L3 3.5z" fill="#fff"/></svg>
<div class="t" style="left:229.6px;top:402px;font-size:11px;letter-spacing:-0.12px">ME-07f2-9a10-714a-4ab7-c54f-4561</div>
<div class="t" style="left:437.3px;top:402px;font-size:11px;"><span style="font-size:10.25px;letter-spacing:-0.37px">ACME USA</span></div>
<div class="t" style="left:539px;top:402px;font-size:11px;"><span style="font-size:10.5px;letter-spacing:-0.64px">US</span></div>
<div class="t" style="left:710.1px;top:402px;font-size:11px;letter-spacing:-0.19px">2022-04-27 07:25:35</div>
<div class="sw" style="left:643px;top:401.7px"><i></i></div>
<svg class="ic" style="left:812px;top:404.9px" width="10.2" height="10.2" viewBox="0 0 10 10"><circle cx="5" cy="5" r="5" fill="#428bca"/><path d="M1.9 2.3C2.5 1.4 3.6 1.1 4.3 1.6l.6 1 1-1c.8-.1 1.5.4 1.6 1.2C7.4 4 6.5 4.8 5.7 5.4L5 6.7C4.1 6.2 3.1 5.2 2.5 4.4 2 3.7 1.7 3 1.9 2.3z" fill="#eef5fb"/><circle cx="6.6" cy="8.1" r=".7" fill="#eef5fb"/></svg>
<div class="btn" style="left:1014.4px;top:401.9px;width:63.5px"></div>
<svg class="ic" style="left:1019.8px;top:407.0px;color:#fff;" width="10.2" height="8.2" viewBox="0 0 11 10" preserveAspectRatio="none" fill="currentColor"><path d="M0 .3h2.7v2.4H0zM3.6.3H11v2.4H3.6zM0 3.8h2.7v2.4H0zM3.6 3.8H11v2.4H3.6zM0 7.3h2.7v2.4H0zM3.6 7.3H11v2.4H3.6z"/></svg>
<div class="t" style="left:1032.5px;top:404px;font-size:10px;line-height:15px;color:#fff;-webkit-text-stroke:0.22px #fff;letter-spacing:-0.22px">Overview</div>
<div class="btn" style="left:1083.1px;top:401.9px;width:39.2px"></div>
<svg class="ic" style="left:1087.6px;top:406.7px" width="10.4" height="8.6" viewBox="0 0 10.4 8.6"><rect x=".5" y="1" width="7.5" height="7.1" rx=".9" fill="none" stroke="#fff" stroke-width="1.05" opacity=".95"/><path d="M8.9.1l1.5 1.5-5.3 5.3-2 .5.5-2z" fill="#fff" stroke="#428bca" stroke-width=".7"/></svg>
<div class="t" style="left:1100.6px;top:404px;font-size:10px;line-height:15px;color:#fff;-webkit-text-stroke:0.22px #fff;letter-spacing:-0.1px">Edit</div>
<div class="btn" style="left:1128.5px;top:401.9px;width:69.4px"></div>
<svg class="ic" style="left:1132.7px;top:407.0px;color:#fff;" width="8.9" height="8.9" viewBox="0.3 0.1 15.3 15.8" preserveAspectRatio="none" fill="currentColor"><circle cx="12.4" cy="3.2" r="3.1"/><circle cx="3.4" cy="8" r="3.1"/><circle cx="12.4" cy="12.8" r="3.1"/><path d="M3.4 8l9-4.8M3.4 8l9 4.8" stroke="currentColor" stroke-width="2.3" fill="none"/></svg>
<div class="t" style="left:1143.8px;top:404px;font-size:10px;line-height:15px;color:#fff;-webkit-text-stroke:0.22px #fff;letter-spacing:-0.25px">Connectors</div>
<div class="btn" style="left:1204px;top:401.9px;width:51px"></div>
<svg class="ic" style="left:1207.9px;top:407.7px;color:#fff;" width="9" height="7.6" viewBox="0 0 10 10" preserveAspectRatio="none" fill="currentColor"><path d="M0 .4h10v2H0zM0 4h10v2H0zM0 7.6h10v2H0z"/></svg>
<div class="t" style="left:1219px;top:404px;font-size:10px;line-height:15px;color:#fff;-webkit-text-stroke:0.22px #fff;letter-spacing:-0.43px">More</div>
<svg class="ic" style="left:1242.8px;top:410.9px" width="6.8" height="3.5" viewBox="0 0 6 3.5" preserveAspectRatio="none"><path d="M0 0h6L3 3.5z" fill="#fff"/></svg>
<div class="t" style="left:221.7px;top:445px;font-size:11px;color:#222;letter-spacing:-0.0px">Showing 1 to 5 of 5 entries</div>
<div class="pg" style="left:1131px;width:28px;border-radius:3px 0 0 3px;"></div>
<div class="pg" style="left:1158px;width:26px;border-radius:0;"></div>
<div class="pg" style="left:1183px;width:28px;border-radius:0;background:#428bca;border-color:#428bca;z-index:1;"></div>
<div class="pg" style="left:1210px;width:26px;border-radius:0;"></div>
<div class="pg" style="left:1235px;width:28px;border-radius:0 3px 3px 0;"></div>
<div class="t" style="left:1140px;top:446.8px;width:10px;text-align:center;font-size:10px;color:#777">«</div>
<div class="t" style="left:1165.8px;top:446.8px;width:10px;text-align:center;font-size:10px;color:#777">‹</div>
<div class="t" style="left:1218.2px;top:446.8px;width:10px;text-align:center;font-size:10px;color:#777">›</div>
<div class="t" style="left:1244px;top:446.8px;width:10px;text-align:center;font-size:10px;color:#777">»</div>
<div class="t" style="left:1192px;top:446px;width:10px;text-align:center;font-size:11px;color:#fff;z-index:2">1</div>
<div id="hl"></div>
</body>
</html>
